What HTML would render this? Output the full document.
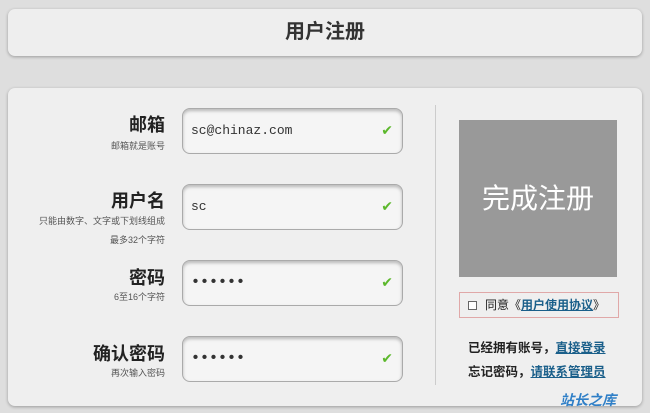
<!DOCTYPE html>
<html><head><meta charset="utf-8"><style>
*{margin:0;padding:0;box-sizing:border-box}
body{width:650px;height:413px;background:#dedede;font-family:"Liberation Sans","Noto Sans CJK SC",sans-serif;position:relative;overflow:hidden;color:#222}
.hdr{position:absolute;left:8px;top:9px;width:634px;height:47px;background:#eee;border-radius:7px;box-shadow:0 1px 3px rgba(0,0,0,.3);text-align:center;font-size:20px;line-height:47px;color:#333;font-weight:600}
.main{position:absolute;left:8px;top:88px;width:634px;height:318px;background:#efefef;border-radius:7px;box-shadow:0 1px 3px rgba(0,0,0,.3)}
.lbl{position:absolute;right:485px;text-align:right;font-weight:bold;font-size:18px;color:#222}
.sub{position:absolute;right:485px;text-align:right;font-size:9px;color:#555;line-height:19px}
.inp{position:absolute;left:182px;width:221px;height:46px;border:1px solid #aaa;border-radius:8px;background:#f5f5f5;box-shadow:inset 0 2px 3px rgba(0,0,0,.25);font-family:"Liberation Mono",monospace;font-size:13px;line-height:44px;padding-left:8px;color:#333}
.pw{font-size:15px;font-weight:bold}
.ck{position:absolute;right:9px;top:0;color:#5cb82c;font-size:14px;font-family:"DejaVu Sans",sans-serif;font-weight:normal}
.div{position:absolute;left:435px;top:105px;width:1px;height:280px;background:#ccc}
.btn{position:absolute;left:459px;top:120px;width:158px;height:157px;background:#999;color:#fff;font-size:28px;text-align:center;line-height:157px}
.agr{position:absolute;left:459px;top:292px;width:160px;height:26px;border:1px solid #e0a8a8;font-size:12px;line-height:24px;padding-left:8px;color:#222}
.agr span.b{display:inline-block;width:9px;height:9px;border:1px solid #666;margin-right:8px;vertical-align:-1px;background:#fff}
a{color:#1a5f8a;text-decoration:underline;font-weight:bold}
.ln{position:absolute;left:468px;font-size:12.5px;font-weight:bold;color:#222}
.logo{position:absolute;left:560px;top:390px;font-size:14px;font-weight:bold;color:#2f7fc7;font-style:italic}
</style></head><body>
<div class="hdr">用户注册</div>
<div class="main"></div>
<div class="lbl" style="top:111px">邮箱</div>
<div class="sub" style="top:137px">邮箱就是账号</div>
<div class="inp" style="top:108px">sc@chinaz.com<span class="ck">✔</span></div>
<div class="lbl" style="top:187px">用户名</div>
<div class="sub" style="top:212px">只能由数字、文字或下划线组成<br>最多32个字符</div>
<div class="inp" style="top:184px">sc<span class="ck">✔</span></div>
<div class="lbl" style="top:264px">密码</div>
<div class="sub" style="top:288px">6至16个字符</div>
<div class="inp pw" style="top:260px">••••••<span class="ck">✔</span></div>
<div class="lbl" style="top:340px">确认密码</div>
<div class="sub" style="top:364px">再次输入密码</div>
<div class="inp pw" style="top:336px">••••••<span class="ck">✔</span></div>
<div class="div"></div>
<div class="btn">完成注册</div>
<div class="agr"><span class="b"></span>同意《<a>用户使用协议</a>》</div>
<div class="ln" style="top:337px">已经拥有账号，<a>直接登录</a></div>
<div class="ln" style="top:361px">忘记密码，<a>请联系管理员</a></div>
<div class="logo">站长之库</div>
</body></html>
